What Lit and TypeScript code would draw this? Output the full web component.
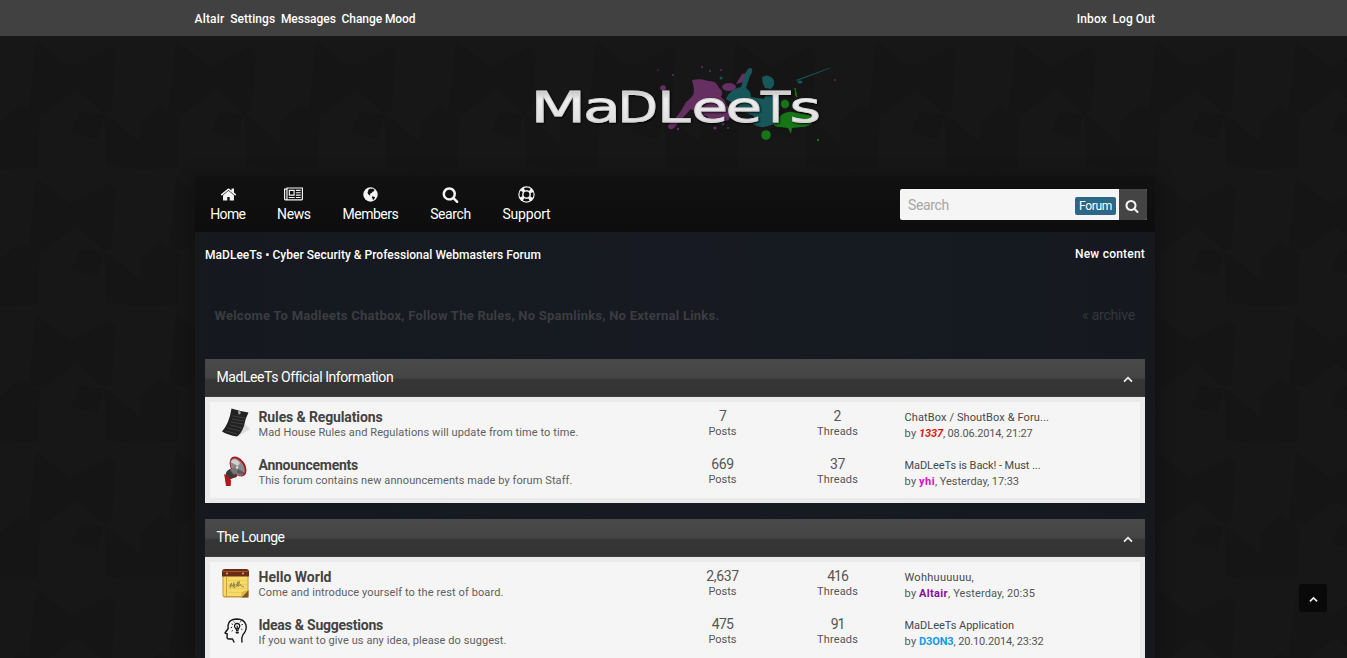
import { LitElement, html, svg, css } from "lit";
import { customElement, property } from "lit/decorators.js";

/* A run of text tracked so that it spans the given measure. */
@customElement("fit-text")
class FitText extends LitElement {
  @property() text = "";
  @property({ type: Number }) w = 0;
  static styles = css`
    :host { display: inline-block; white-space: pre; }
    .run { display: inline-block; }
  `;
  updated() {
    const run = this.renderRoot.querySelector(".run") as HTMLElement;
    run.style.letterSpacing = "0px";
    const natural = run.getBoundingClientRect().width;
    if (this.w && this.text.length) {
      run.style.letterSpacing = `${(this.w - natural) / this.text.length}px`;
    }
  }
  render() {
    return html`<span class="run">${this.text}</span>`;
  }
}

const t = (text: string, w: number) => html`<fit-text .text=${text} .w=${w}></fit-text>`;

const searchPath =
  "M1216 832q0-185-131.500-316.500t-316.500-131.500-316.500 131.500-131.500 316.500 131.500 316.500 316.500 131.500 316.500-131.500 131.500-316.500zm512 832q0 52-38 90t-90 38q-54 0-90-38l-343-342q-179 124-399 124-143 0-273.500-55.500t-225-150-150-225-55.500-273.500 55.500-273.500 150-225 225-150 273.500-55.500 273.500 55.500 225 150 150 225 55.500 273.500q0 220-124 399l343 343q37 37 37 90z";

const icons: Record<string, unknown> = {
  home: html`<svg class="ico nudge" width="17" height="17" viewBox="0 0 1792 1792"><path d="M1472 992v480q0 26-19 45t-45 19h-384v-384h-256v384h-384q-26 0-45-19t-19-45v-480q0-1 .5-3t.5-3l575-474 575 474q1 2 1 6zm223-69l-62 74q-8 9-21 11h-3q-13 0-21-7l-692-577-692 577q-12 8-24 7-13-2-21-11l-62-74q-8-10-7-23.500t11-21.500l719-599q32-26 76-26t76 26l244 204v-195q0-14 9-23t23-9h192q14 0 23 9t9 23v408l219 182q10 8 11 21.500t-7 23.500z"/></svg>`,
  news: html`<svg class="ico" width="19" height="17" viewBox="0 0 2048 1792"><path d="M1024 512h-384v384h384v-384zm128 640v128h-640v-128h640zm0-768v640h-640v-640h640zm640 768v128h-512v-128h512zm0-256v128h-512v-128h512zm0-256v128h-512v-128h512zm0-256v128h-512v-128h512zm-1536 960v-960h-128v960q0 26 19 45t45 19 45-19 19-45zm1664 0v-1088h-1536v1088q0 33-11 64h1483q26 0 45-19t19-45zm128-1216v1216q0 80-56 136t-136 56h-1664q-80 0-136-56t-56-136v-1088h256v-128h1792z"/></svg>`,
  members: html`<svg class="ico" width="17" height="17" viewBox="0 0 17 17"><circle cx="8.500" cy="8.500" r="7.200"/><path class="cut" d="M6.400 3.800l1.800-1.300 1.300.6 1.300-.5 1.800 1.400-1 1.400-1.300.4-.5 1.200-1.500.5-.4 1 .7.8-.7.3-1.400-1.200-1-1.700.6-1.500zM10 10.400l1.600.1 1.500 1-1 1.700-1.300.7-.2-1.400-.8-1.100z"/></svg>`,
  search: html`<svg class="ico" width="17" height="17" viewBox="0 0 1792 1792"><path d=${searchPath}/></svg>`,
  support: html`<svg class="ico" width="17" height="17" viewBox="0 0 17 17"><circle cx="8.500" cy="8.500" r="8.200"/><circle class="ring" cx="8.500" cy="8.500" r="5.700"/><circle class="cut" cx="8.500" cy="8.500" r="2.900"/></svg>`,
};

const chevron = html`<svg class="chev" width="10" height="7" viewBox="0 0 10 7"><path d="M1 5.600L5 1.700 9 5.600"/></svg>`;

const forumIcons: Record<string, unknown> = {
  paper: html`<svg width="32" height="32" viewBox="0 0 32 32">
    <path d="M25 17l5 5-11 7z" fill="#dcdcdc"/>
    <path d="M11.500 1.500Q19 4 28.500 5.500 25 12 24 19q-3 8-7 10.500Q8 28 2 24.500 9 17 11.500 1.500z" fill="#222"/>
    <path d="M13 9l12 2M12 12l12 2M11 15l12 2M10 18l12 3M8 21l12 3M6 24l11 3" stroke="#404040" fill="none"/>
    <path d="M18 4l2.500.5v2.500l-2 .5z" fill="#aaa"/></svg>`,
  horn: html`<svg width="32" height="32" viewBox="0 0 32 32">
    <path d="M6 18l7-4 4 8-7 2 .5 7H6L5 23z" fill="#b30d12"/>
    <path d="M10 14Q5 16 6 21l5 3 7-4-2-8z" fill="#3b3b3b"/><path d="M4 19l6 4 1 3-.5 5H6.500z" fill="#b4161a"/>
    <ellipse cx="18" cy="11.500" rx="7.200" ry="11" transform="rotate(-33 18 11.500)" fill="#a8151b"/>
    <ellipse cx="17.600" cy="12" rx="5.900" ry="9.600" transform="rotate(-33 17.600 12)" fill="#8a8a8a"/>
    <path d="M10.500 7Q14 1 20 8l-2 3z" fill="#d0d0d0"/><path d="M17 13l8 5q-4 4-9-1z" fill="#5b5b5b"/>
    <path d="M10 15l6-4 3 3-5 6z" fill="#777"/><circle cx="17" cy="12.500" r="1.300" fill="#ddd"/></svg>`,
  note: html`<svg width="32" height="32" viewBox="0 0 32 32">
    <rect x="2.500" y="2.500" width="26" height="28" rx="2" fill="#c9973c"/><rect x="3.500" y="8" width="24" height="21" fill="#f7db69"/>
    <path d="M2 5q0-3 3-3h21q3 0 3 3v4.500H2z" fill="#6b2c15"/><path d="M3 4.500h25" stroke="#9c5a3a"/><path d="M6.500 10v19" stroke="#d79b3b"/>
    <path d="M8 13.500h19M8 17.500h19M8 21.500h19M8 25.500h15" stroke="#ecca58"/>
    <path d="M9 20q2-2 2.500-4l-1 5M10 19l3-.5 1-3-1 5M13.500 19.500q2-1 1.500-2t-1 2 2 0l2-5-1 5 2.500-5-1 5 2-2 .5 1.500 3 1" stroke="#7d7048" stroke-width=".7" fill="none"/>
    <circle cx="7" cy="6.500" r="1.100" fill="#d99e60"/><circle cx="23" cy="6.500" r="1.100" fill="#d99e60"/><path d="M28.500 23v7.500h-7z" fill="#7b5a20"/><path d="M21 30l1-5 6-2z" fill="#e9ab3a"/></svg>`,
  head: html`<svg width="32" height="32" viewBox="0 0 32 32" fill="none" stroke="#151515" stroke-width="1.400" stroke-linecap="round" stroke-linejoin="round">
    <path d="M22 27q-1-4 1-7.500 4-4 3-9.500Q24 4 17 4 8.500 4.300 8 10.500L8.200 13.500l-3.200 4.500 2.300 1-.3 3q0 2 2 2h3.500l1.500 3"/>
    <path d="M14.500 11.500q0-3 2.500-3.200 2.800.2 2.800 3-.5 1.500-1.500 2.700l-.3 1.500h-1.500l-.3-1.500q-1.200-1-1.700-2.500zM17.200 11v3" stroke-width="1.200"/><path d="M16.500 17.500h1.500" stroke-width="1.800"/>
    <path d="M12 9l.6.300M14 6.800l.3.400M20.500 6.600l-.3.400M22.500 9.500l-.6.200M11.200 12.500h.5M12 16l.5-.3M22 14.500l-.5-.3" stroke-width="1"/></svg>`,
};

interface Row {
  icon: string; title: [string, number]; desc: [string, number];
  posts: [string, number]; threads: [string, number];
  last: [string, number]; user: [string, number]; tone: string; when: [string, number];
}

const blocks: { title: [string, number]; rows: Row[] }[] = [
  {
    title: ["MadLeeTs Official Information", 175.500],
    rows: [
      { icon: "paper", title: ["Rules & Regulations", 124], desc: ["Mad House Rules and Regulations will update from time to time.", 320], posts: ["7", 7], threads: ["2", 8], last: ["ChatBox / ShoutBox & Foru...", 144.500], user: ["1337", 24], tone: "red", when: [", 08.06.2014, 21:27", 89.500] },
      { icon: "horn", title: ["Announcements", 99.500], desc: ["This forum contains new announcements made by forum Staff.", 314], posts: ["669", 22.500], threads: ["37", 15], last: ["MaDLeeTs is Back! - Must ...", 136], user: ["yhi", 16], tone: "pink", when: [", Yesterday, 17:33", 84] },
    ],
  },
  {
    title: ["The Lounge", 68],
    rows: [
      { icon: "note", title: ["Hello World", 73], desc: ["Come and introduce yourself to the rest of board.", 245], posts: ["2,637", 32.500], threads: ["416", 20.500], last: ["Wohhuuuuuu,", 69.500], user: ["Altair", 29], tone: "purple", when: [", Yesterday, 20:35", 87] },
      { icon: "head", title: ["Ideas & Suggestions", 124.500], desc: ["If you want to give us any idea, please do suggest.", 248], posts: ["475", 21.500], threads: ["91", 13.500], last: ["MaDLeeTs Application", 109.500], user: ["D3ON3", 34.500], tone: "blue", when: [", 20.10.2014, 23:32", 90] },
    ],
  },
];

const nav: [string, string, number][] = [
  ["home", "Home", 35], ["news", "News", 33.500], ["members", "Members", 56],
  ["search", "Search", 40.500], ["support", "Support", 48],
];

const glyphs: [string, number, number][] = [
  ["M", 530.600, 55.500], ["a", 583, 38], ["D", 617.600, 40.500], ["L", 657, 33.500],
  ["e", 691.500, 36.500], ["e", 725.500, 36.500], ["T", 761, 29.300], ["s", 789.500, 31.500],
];

@customElement("app-root")
class AppRoot extends LitElement {
  static styles = css`
    :host { display: block; position: relative; height: 658px; overflow: hidden; color: #fff;
      font-family: Roboto, "Noto Sans", sans-serif; background-color: #171717;
      background-image: url("data:image/svg+xml,%3Csvg xmlns='http://www.w3.org/2000/svg' width='140' height='137'%3E%3Cg fill='%23151515'%3E%3Cpath d='M36 4l34 26 40-20 6 6-4 60-8 2-28-24-32 24-16-2z'/%3E%3Cpath d='M0 86l20-18 20 12-2 52-38 2zM104 76l36 30v28l-34-4zM70 96l10-20 24 2-6 26z'/%3E%3C/g%3E%3C/svg%3E");
      background-position: 0 36px; }
    * { box-sizing: border-box; }
    fit-text { vertical-align: top; }
    .top { height: 36px; background: #414141; display: flex; justify-content: center; }
    .topin { width: 961px; display: flex; justify-content: space-between; font-size: 12px; line-height: 38px; font-weight: 500; position: relative; left: 1px; }
    .links { display: flex; gap: 5.700px; }
    .links:first-child { padding-left: .5px; }
    .brand { height: 141px; display: block; }
    .logo { display: block; }
    .letters { font-family: "DejaVu Sans", sans-serif; font-size: 43px; }
    .wrap { width: 960px; margin-left: 195px; height: 481px; box-shadow: 0 0 12px 2px #111; background: linear-gradient(90deg, #16181b, #15191f 2%, #171a22 50%, #15191f 98%, #16181b); }
    .nav { height: 55px; background: linear-gradient(#111, #0d0d0d); display: flex; justify-content: space-between; padding: 0 8px 0 15.300px; }
    .items { display: flex; gap: 31.800px; }
    .item { display: flex; flex-direction: column; align-items: center; padding-top: 9px; font-size: 14px; line-height: 20px; }
    .ico { fill: #f4f4f4; display: block; height: 17px; margin-bottom: 1px; }
    .nudge { margin-left: 1px; }
    .cut { fill: #0e0e0e; }
    .ring { fill: none; stroke: #0e0e0e; stroke-width: 2.600; stroke-dasharray: 5.600 3.353; stroke-dashoffset: 2.800; }
    .find { margin-top: 12px; height: 31px; width: 247px; display: flex; border-radius: 2px; overflow: hidden; background: #f5f5f5; }
    .field { flex: 1; padding-left: 8px; color: #a5a5a5; font-size: 14px; line-height: 33px; }
    .badge { margin: 8px 3px 0 0; width: 41px; height: 18px; background: #2b6888; border-radius: 2px; text-align: center; font-size: 12px; line-height: 19px; }
    .go { width: 28px; background: #444; display: flex; align-items: center; justify-content: center; padding: 3px 2px 0 0; }
    .go .ico { width: 14px; height: 14px; }
    .crumbs { height: 69px; padding: 13px 10px 0; display: flex; justify-content: space-between; font-size: 12px; line-height: 21px; font-weight: 500; }
    .crumbs .right { line-height: 19px; }
    .chat { height: 58px; padding: 4px 20px 0 19.500px; display: flex; justify-content: space-between; font-size: 13px; line-height: 21px; color: #3b3d40; font-weight: 700; }
    .chat .right { font-weight: 400; color: #34373b; line-height: 20px; font-size: 14px; }
    .block { margin: 0 10px 16px; }
    .head { height: 38px; background: linear-gradient(#494a49, #434443 50%, #363636 54%, #333 96%, #444 100%); display: flex; justify-content: space-between; padding: 0 12.500px 0 11.500px; font-size: 14px; line-height: 37px; }
    .chev { fill: none; stroke: #eee; stroke-width: 1.800; display: block; }
    .head .chev { margin-top: 17px; }
    .body { background: #f5f5f5; border: 5px solid #eaeaea; height: 106px; }
    .row { height: 48px; display: grid; grid-template-columns: 48.500px 396px 136px 94px 1fr; color: #555; font-size: 11px; line-height: 15px; }
    .pic { padding: 5px 0 0 10px; }
    .pic svg { display: block; }
    .title { font-size: 14px; font-weight: 700; color: #434343; line-height: 16px; padding-top: 7px; }
    .desc { color: #606060; line-height: 16px; }
    .num { text-align: center; }
    .big { font-size: 14px; line-height: 16px; padding-top: 6px; }
    .cap { line-height: 16px; }
    .last { padding-left: 20px; padding-top: 8px; color: #484848; line-height: 16px; }
    .by { display: flex; color: #555; }
    .by b { font-weight: 700; margin-left: 2.500px; }
    .red { color: #e41212; font-style: italic; }
    .pink { color: #dc0cc4; }
    .purple { color: #8a0c9c; }
    .blue { color: #1699e8; }
    .totop { position: absolute; left: 1299px; top: 584px; width: 28px; height: 28px; border-radius: 3px; background: #090909; display: flex; align-items: center; justify-content: center; padding-top: 3px; }
    .totop .chev { width: 9px; }
  `;

  logo() {
    return html`<svg class="logo" width="1347" height="141" viewBox="0 36 1347 141" aria-label="MaDLeeTs">
      <defs><linearGradient id="m" x1="0" y1="0" x2="0" y2="1"><stop offset="0" stop-color="#999"/><stop offset=".35" stop-color="#eee"/><stop offset=".75" stop-color="#e2e2e2"/><stop offset="1" stop-color="#999"/></linearGradient>
      <filter id="s" x="-5%" y="-20%" width="110%" height="150%"><feDropShadow dx="1" dy="1" stdDeviation="1.300" flood-color="#000" flood-opacity="1"/></filter></defs>
      <g fill="#662f62"><path d="M692 80q10-2 16 1 8-1 11 7 5 3 2 9 8 6 5 15l3 8-4 1-6-1-8-3-10-2-10-6q-8 8-17 19-4 3-6-1 0-3 4-5 8-8 14-20 7-5 8-10 0-6-2-12z"/>
        <path d="M704 110l24-4 2 12-10 6-4-3-5 3z"/><ellipse cx="729" cy="87" rx="7" ry="4"/><path d="M736 84l6-10 4-1-2 9z"/><circle cx="663" cy="88" r="2.800"/><circle cx="702" cy="67" r="1"/><circle cx="673" cy="75" r="1"/><circle cx="710" cy="71" r="1"/><circle cx="678" cy="129" r="1.200"/><circle cx="715" cy="128" r="1.600"/><circle cx="723" cy="124" r="1.300"/><circle cx="728" cy="128" r="1"/><circle cx="835" cy="80" r="1"/><circle cx="721" cy="70" r="1"/><circle cx="658" cy="70" r=".8"/></g>
      <g fill="#175659"><path d="M726 99q4-10 15-12l5-15q3-6 6-3 1 3-2 7l-4 12q5 3 5 9l13 2 3-8 6 2 5-1 2 9-1 21-5 2-6 2q-8 3-15-2l1-8-13-5-7-7z"/><path d="M762 77q5-3 9 0 4 2 3 8l-3 4-6-1q-3-5-3-11z"/><path d="M796 80l33-12 2 0-34 13z"/><ellipse cx="800" cy="82" rx="2.500" ry="1.500"/><circle cx="721" cy="78" r="1.500"/></g>
      <g fill="#167516"><path d="M774 123q4-3 6-7 7-5 12-4l17 3q6 2 5 6-4 6-13 6l-9 1-1 6-3-6-8-1q-7 0-6-4z"/><circle cx="766" cy="135" r="4.800"/><circle cx="785" cy="104" r="4.200"/><path d="M795 88l2 9-1-1z" stroke="#167516"/><circle cx="779" cy="109" r="1.200"/><circle cx="818" cy="140" r="1.200"/><circle cx="793" cy="107" r="1.300"/></g>
      <text class="letters" y="122" fill="url(#m)" stroke="#d8d8d8" stroke-width=".8" filter="url(#s)">${glyphs.map(([c, x, w]) => svg`<tspan x=${x} textLength=${w} lengthAdjust="spacingAndGlyphs">${c}</tspan>`)}</text>
    </svg>`;
  }

  row(r: Row) {
    return html`<div class="row">
      <div class="pic">${forumIcons[r.icon]}</div>
      <div><div class="title">${t(...r.title)}</div><div class="desc">${t(...r.desc)}</div></div>
      <div class="num"><div class="big">${t(...r.posts)}</div><div class="cap">${t("Posts", 28)}</div></div>
      <div class="num"><div class="big">${t(...r.threads)}</div><div class="cap">${t("Threads", 41)}</div></div>
      <div class="last"><div>${t(...r.last)}</div>
        <div class="by">${t("by", 12)}<b class=${r.tone}>${t(...r.user)}</b>${t(...r.when)}</div></div>
    </div>`;
  }

  render() {
    return html`
      <div class="top"><div class="topin">
        <div class="links">${t("Altair", 30)}${t("Settings", 45)}${t("Messages", 55)}${t("Change Mood", 74)}</div>
        <div class="links">${t("Inbox", 30)}${t("Log Out", 42.500)}</div>
      </div></div>
      <div class="brand">${this.logo()}</div>
      <div class="wrap">
        <div class="nav">
          <div class="items">${nav.map(([i, l, w]) => html`<div class="item">${icons[i]}${t(l, w)}</div>`)}</div>
          <div class="find"><div class="field">${t("Search", 41)}</div><div class="badge">${t("Forum", 33)}</div><div class="go">${icons.search}</div></div>
        </div>
        <div class="crumbs"><div>${t("MaDLeeTs • Cyber Security & Professional Webmasters Forum", 336)}</div><div class="right">${t("New content", 70)}</div></div>
        <div class="chat"><div>${t("Welcome To Madleets Chatbox, Follow The Rules, No Spamlinks, No External Links.", 505)}</div><div class="right">${t("« archive", 53)}</div></div>
        ${blocks.map((b) => html`<div class="block"><div class="head">${t(...b.title)}${chevron}</div><div class="body">${b.rows.map((r) => this.row(r))}</div></div>`)}
      </div>
      <div class="totop">${chevron}</div>`;
  }
}
